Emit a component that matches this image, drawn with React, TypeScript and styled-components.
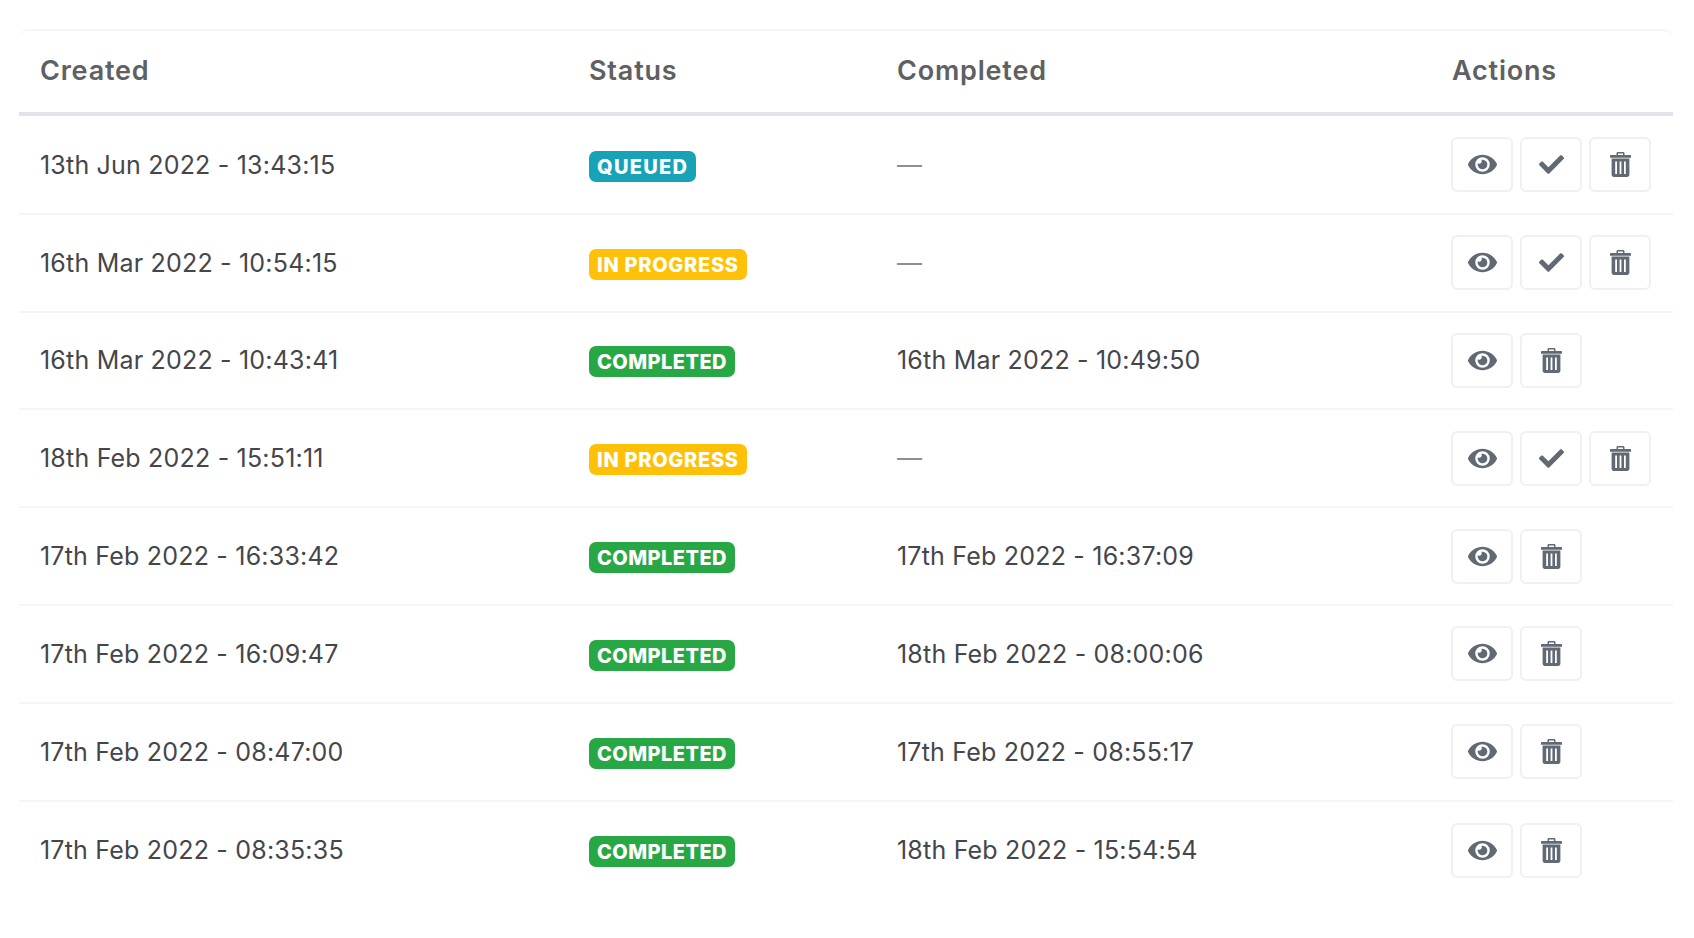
import React from "react";
import styled, { createGlobalStyle } from "styled-components";
import { FaEye, FaCheck } from "react-icons/fa";

const Global = createGlobalStyle`
  html, body { margin: 0; padding: 0; background: #fff; }
  body { font-family: Inter, "Noto Sans", sans-serif; }
`;

const Page = styled.div`
  width: 1694px;
  height: 938px;
  box-sizing: border-box;
  padding: 29px 21px 0 19px;
  overflow: hidden;
`;

const Card = styled.div`
  border-top: 2px solid #f6f6f6;
  border-radius: 10px 10px 0 0;
`;

const columns = "549px 308px 555px 242px";

const HeadRow = styled.div`
  display: grid;
  grid-template-columns: ${columns};
  height: 81px;
  align-items: start;
  border-bottom: 4px solid #e3e3ec;
  margin-bottom: 1px;
`;

const HeadCell = styled.div`
  padding: 23px 0 0 21px;
  font-size: 27px;
  line-height: 34px;
  font-weight: 600;
  color: #5f6062;
  letter-spacing: 0.8px;
`;

const Row = styled.div<{ $last?: boolean }>`
  display: grid;
  grid-template-columns: ${columns};
  height: 97.8px;
  box-sizing: border-box;
  align-items: center;
  border-bottom: ${(p) => (p.$last ? "none" : "2px solid #f5f5f5")};
`;

const Cell = styled.div`
  padding-left: 21px;
  font-size: 25px;
  font-weight: 400;
  color: #45464a;
  letter-spacing: 0.2px;
`;

const Dash = styled.span`
  color: #8d8f92;
`;

const tones = {
  queued: { bg: "#17a2b8", spacing: 1.3 },
  progress: { bg: "#ffc107", spacing: 0.7 },
  done: { bg: "#28a745", spacing: 0.45 },
};

const Badge = styled.span<{ $tone: keyof typeof tones }>`
  display: inline-flex;
  align-items: center;
  justify-content: center;
  box-sizing: border-box;
  height: 31px;
  padding: 1px 8px 0;
  border-radius: 7px;
  background: ${(p) => tones[p.$tone].bg};
  color: #fff;
  font-size: 20px;
  font-weight: 800;
  letter-spacing: ${(p) => tones[p.$tone].spacing}px;
  margin-top: 3px;
`;

const Actions = styled.div`
  display: flex;
  gap: 7px;
  padding-left: 20px;
`;

const IconButton = styled.button<{ $size?: number }>`
  width: 62px;
  height: 55px;
  padding: 0;
  display: flex;
  align-items: center;
  justify-content: center;
  background: #fff;
  border: 2px solid #f0f0f0;
  border-radius: 6px;
  color: #616a74;
  font-size: ${(p) => p.$size ?? 25}px;
`;

const TrashIcon = () => (
  <svg width="21" height="25" viewBox="0 0 21 25" fill="currentColor" aria-hidden="true">
    <path d="M6.5 3V1.4C6.5.6 7.1 0 7.9 0h5.2c.8 0 1.4.6 1.4 1.4V3H20c.6 0 1 .4 1 1v1.8H0V4c0-.6.4-1 1-1h5.5zM8 3h5V1.6H8V3z" />
    <path
      fillRule="evenodd"
      d="M1.6 6.6h17.8v16.2c0 1.2-1 2.2-2.2 2.2H3.8c-1.2 0-2.2-1-2.2-2.2V6.6zM5.2 9.6v12.4h1.8V9.6H5.2zm4.4 0v12.4h1.8V9.6H9.6zm4.4 0v12.4h1.8V9.6H14z"
    />
  </svg>
);

type RowData = {
  created: string;
  status: "QUEUED" | "IN PROGRESS" | "COMPLETED";
  completed?: string;
};

const rows: RowData[] = [
  { created: "13th Jun 2022 - 13:43:15", status: "QUEUED" },
  { created: "16th Mar 2022 - 10:54:15", status: "IN PROGRESS" },
  { created: "16th Mar 2022 - 10:43:41", status: "COMPLETED", completed: "16th Mar 2022 - 10:49:50" },
  { created: "18th Feb 2022 - 15:51:11", status: "IN PROGRESS" },
  { created: "17th Feb 2022 - 16:33:42", status: "COMPLETED", completed: "17th Feb 2022 - 16:37:09" },
  { created: "17th Feb 2022 - 16:09:47", status: "COMPLETED", completed: "18th Feb 2022 - 08:00:06" },
  { created: "17th Feb 2022 - 08:47:00", status: "COMPLETED", completed: "17th Feb 2022 - 08:55:17" },
  { created: "17th Feb 2022 - 08:35:35", status: "COMPLETED", completed: "18th Feb 2022 - 15:54:54" },
];

const toneOf = { QUEUED: "queued", "IN PROGRESS": "progress", COMPLETED: "done" } as const;

export default function App() {
  return (
    <Page>
      <Global />
      <Card>
        <HeadRow>
          <HeadCell>Created</HeadCell>
          <HeadCell>Status</HeadCell>
          <HeadCell>Completed</HeadCell>
          <HeadCell>Actions</HeadCell>
        </HeadRow>
        {rows.map((r, i) => (
          <Row key={r.created} $last={i === rows.length - 1}>
            <Cell>{r.created}</Cell>
            <Cell>
              <Badge $tone={toneOf[r.status]}>{r.status}</Badge>
            </Cell>
            <Cell>{r.completed ?? <Dash>—</Dash>}</Cell>
            <Actions>
              <IconButton aria-label="View" $size={29}><FaEye /></IconButton>
              {r.status !== "COMPLETED" && (
                <IconButton aria-label="Complete"><FaCheck /></IconButton>
              )}
              <IconButton aria-label="Delete"><TrashIcon /></IconButton>
            </Actions>
          </Row>
        ))}
      </Card>
    </Page>
  );
}
